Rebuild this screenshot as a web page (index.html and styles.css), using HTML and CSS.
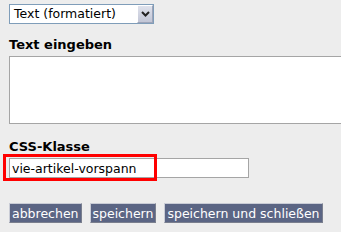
FILE: index.html
```html
<!DOCTYPE html>
<html lang="de">
<head>
    <meta charset="UTF-8">
    <title>Textblock bearbeiten</title>
    <link rel="stylesheet" href="styles.css">
</head>
<body>
    <div class="form">
        <div class="select">
            <span class="select-value">Text (formatiert)</span>
            <span class="select-btn">
                <svg width="9" height="6" viewBox="0 0 9 6"><path d="M1 1 L4.5 4.5 L8 1" fill="none" stroke="#222" stroke-width="2"/></svg>
            </span>
        </div>

        <label class="field-label">Text eingeben</label>
        <textarea class="text-input"></textarea>

        <label class="field-label css-label">CSS-Klasse</label>
        <div class="css-row">
            <input type="text" class="css-input" value="vie-artikel-vorspann">
            <div class="highlight"></div>
        </div>

        <div class="actions">
            <button class="btn">abbrechen</button>
            <button class="btn">speichern</button>
            <button class="btn">speichern und schließen</button>
        </div>
    </div>
</body>
</html>
```

FILE: styles.css
```css
* {
    box-sizing: border-box;
}

body {
    margin: 0;
    background: #ededed;
    font-family: "DejaVu Sans", Verdana, sans-serif;
    font-size: 12.5px;
    color: #000;
    overflow: hidden;
}

.form {
    padding: 4px 0 0 9px;
}

.select {
    display: flex;
    width: 145px;
    height: 20px;
    border: 1px solid #7f9db9;
    background: #fff;
}

.select-value {
    flex: 1;
    padding: 1px 0 0 4px;
}

.select-btn {
    width: 16px;
    display: flex;
    align-items: center;
    justify-content: center;
    background: linear-gradient(#dfe2ec, #c2c6d6);
    border: 1px solid #fff;
    border-right-color: #9ea4b8;
    border-bottom-color: #9ea4b8;
}

.field-label {
    display: block;
    font-weight: bold;
    font-size: 13px;
    margin: 13px 0 4px 0;
}

.text-input {
    display: block;
    width: 340px;
    height: 68px;
    border: 1px solid #a5a5a5;
    background: #fff;
    resize: none;
    margin: 0;
}

.css-label {
    margin-top: 15px;
    margin-bottom: 4px;
}

.css-row {
    position: relative;
    width: 240px;
}

.css-input {
    display: block;
    width: 240px;
    height: 20px;
    border: 1px solid #a5a5a5;
    background: #fff;
    font-family: "DejaVu Sans", Verdana, sans-serif;
    font-size: 12.5px;
    padding: 0 2px;
    margin: 0;
}

.highlight {
    position: absolute;
    left: -6px;
    top: -4px;
    width: 154px;
    height: 27px;
    border: 3px solid #f00;
}

.actions {
    display: flex;
    gap: 8px;
    margin-top: 25px;
}

.btn {
    height: 20px;
    padding: 0 2px;
    background: #5b6584;
    color: #fff;
    font-family: "DejaVu Sans", Verdana, sans-serif;
    font-size: 12.5px;
    border: 1px solid #c9ccd6;
    border-right-color: #7a7f8e;
    border-bottom-color: #7a7f8e;
    cursor: pointer;
}
```
